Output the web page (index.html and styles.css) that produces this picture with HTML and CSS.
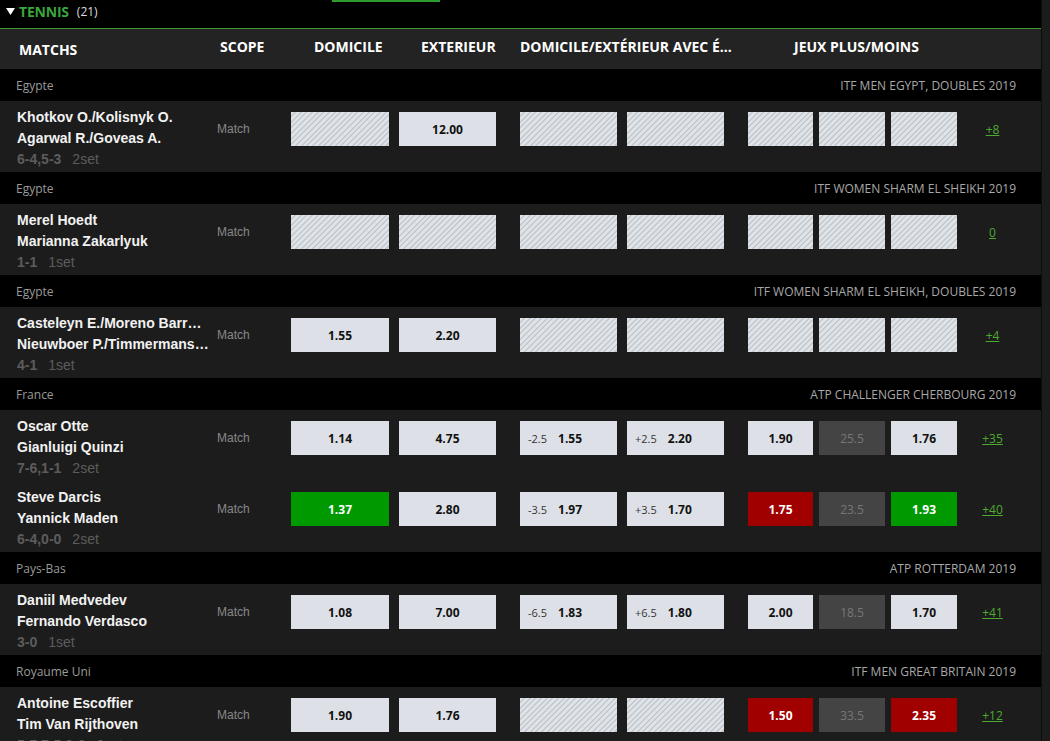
FILE: index.html
```html
<!DOCTYPE html>
<html lang="fr">
<head>
<meta charset="utf-8">
<title>Tennis</title>
<link rel="stylesheet" href="styles.css">
</head>
<body>
<div class="page">
  <main class="main">
    <div class="topbar">
      <div class="tab-indicator"></div>
      <div class="sport-title">
        <svg class="caret" width="9" height="7" viewBox="0 0 9 7"><polygon points="0,0 9,0 4.5,7" fill="#fff"/></svg>
        <span class="sport-name">TENNIS</span>
        <span class="sport-count">(21)</span>
      </div>
    </div>

    <div class="thead">
      <div class="th th-matchs">MATCHS</div>
      <div class="th th-scope">SCOPE</div>
      <div class="th th-dom">DOMICILE</div>
      <div class="th th-ext">EXTERIEUR</div>
      <div class="th th-hcp">DOMICILE/EXTÉRIEUR AVEC É...</div>
      <div class="th th-tot">JEUX PLUS/MOINS</div>
    </div>

    <section class="league">
      <div class="league-head"><span class="country">Egypte</span><span class="tournament">ITF MEN EGYPT, DOUBLES 2019</span></div>
      <div class="match">
        <div class="teams">
          <div class="team">Khotkov O./Kolisnyk O.</div>
          <div class="team">Agarwal R./Goveas A.</div>
          <div class="score"><b>6-4,5-3</b><span class="set">2set</span></div>
        </div>
        <div class="scope">Match</div>
        <div class="grp grp-1x2"><div class="odd dom locked"></div><div class="odd ext">12.00</div></div>
        <div class="grp grp-hcp"><div class="odd hcp locked"></div><div class="odd hcp locked"></div></div>
        <div class="grp grp-tot"><div class="odd tot locked"></div><div class="odd tot mid locked"></div><div class="odd tot locked"></div></div>
        <div class="more"><a href="#">+8</a></div>
      </div>
    </section>

    <section class="league">
      <div class="league-head"><span class="country">Egypte</span><span class="tournament">ITF WOMEN SHARM EL SHEIKH 2019</span></div>
      <div class="match">
        <div class="teams">
          <div class="team">Merel Hoedt</div>
          <div class="team">Marianna Zakarlyuk</div>
          <div class="score"><b>1-1</b><span class="set">1set</span></div>
        </div>
        <div class="scope">Match</div>
        <div class="grp grp-1x2"><div class="odd dom locked"></div><div class="odd ext locked"></div></div>
        <div class="grp grp-hcp"><div class="odd hcp locked"></div><div class="odd hcp locked"></div></div>
        <div class="grp grp-tot"><div class="odd tot locked"></div><div class="odd tot mid locked"></div><div class="odd tot locked"></div></div>
        <div class="more"><a href="#">0</a></div>
      </div>
    </section>

    <section class="league">
      <div class="league-head"><span class="country">Egypte</span><span class="tournament">ITF WOMEN SHARM EL SHEIKH, DOUBLES 2019</span></div>
      <div class="match">
        <div class="teams">
          <div class="team">Casteleyn E./Moreno Barr…</div>
          <div class="team">Nieuwboer P./Timmermans…</div>
          <div class="score"><b>4-1</b><span class="set">1set</span></div>
        </div>
        <div class="scope">Match</div>
        <div class="grp grp-1x2"><div class="odd dom">1.55</div><div class="odd ext">2.20</div></div>
        <div class="grp grp-hcp"><div class="odd hcp locked"></div><div class="odd hcp locked"></div></div>
        <div class="grp grp-tot"><div class="odd tot locked"></div><div class="odd tot mid locked"></div><div class="odd tot locked"></div></div>
        <div class="more"><a href="#">+4</a></div>
      </div>
    </section>

    <section class="league">
      <div class="league-head"><span class="country">France</span><span class="tournament">ATP CHALLENGER CHERBOURG 2019</span></div>
      <div class="match">
        <div class="teams">
          <div class="team">Oscar Otte</div>
          <div class="team">Gianluigi Quinzi</div>
          <div class="score"><b>7-6,1-1</b><span class="set">2set</span></div>
        </div>
        <div class="scope">Match</div>
        <div class="grp grp-1x2"><div class="odd dom">1.14</div><div class="odd ext">4.75</div></div>
        <div class="grp grp-hcp"><div class="odd hcp"><span class="line">-2.5</span>1.55</div><div class="odd hcp"><span class="line">+2.5</span>2.20</div></div>
        <div class="grp grp-tot"><div class="odd tot">1.90</div><div class="odd tot mid">25.5</div><div class="odd tot">1.76</div></div>
        <div class="more"><a href="#">+35</a></div>
      </div>
      <div class="match">
        <div class="teams">
          <div class="team">Steve Darcis</div>
          <div class="team">Yannick Maden</div>
          <div class="score"><b>6-4,0-0</b><span class="set">2set</span></div>
        </div>
        <div class="scope">Match</div>
        <div class="grp grp-1x2"><div class="odd dom up">1.37</div><div class="odd ext">2.80</div></div>
        <div class="grp grp-hcp"><div class="odd hcp"><span class="line">-3.5</span>1.97</div><div class="odd hcp"><span class="line">+3.5</span>1.70</div></div>
        <div class="grp grp-tot"><div class="odd tot down">1.75</div><div class="odd tot mid">23.5</div><div class="odd tot up">1.93</div></div>
        <div class="more"><a href="#">+40</a></div>
      </div>
    </section>

    <section class="league">
      <div class="league-head"><span class="country">Pays-Bas</span><span class="tournament">ATP ROTTERDAM 2019</span></div>
      <div class="match">
        <div class="teams">
          <div class="team">Daniil Medvedev</div>
          <div class="team">Fernando Verdasco</div>
          <div class="score"><b>3-0</b><span class="set">1set</span></div>
        </div>
        <div class="scope">Match</div>
        <div class="grp grp-1x2"><div class="odd dom">1.08</div><div class="odd ext">7.00</div></div>
        <div class="grp grp-hcp"><div class="odd hcp"><span class="line">-6.5</span>1.83</div><div class="odd hcp"><span class="line">+6.5</span>1.80</div></div>
        <div class="grp grp-tot"><div class="odd tot">2.00</div><div class="odd tot mid">18.5</div><div class="odd tot">1.70</div></div>
        <div class="more"><a href="#">+41</a></div>
      </div>
    </section>

    <section class="league">
      <div class="league-head"><span class="country">Royaume Uni</span><span class="tournament">ITF MEN GREAT BRITAIN 2019</span></div>
      <div class="match">
        <div class="teams">
          <div class="team">Antoine Escoffier</div>
          <div class="team">Tim Van Rijthoven</div>
          <div class="score"><b>5-7,7-5,0-0</b><span class="set">3set</span></div>
        </div>
        <div class="scope">Match</div>
        <div class="grp grp-1x2"><div class="odd dom">1.90</div><div class="odd ext">1.76</div></div>
        <div class="grp grp-hcp"><div class="odd hcp locked"></div><div class="odd hcp locked"></div></div>
        <div class="grp grp-tot"><div class="odd tot down">1.50</div><div class="odd tot mid">33.5</div><div class="odd tot down">2.35</div></div>
        <div class="more"><a href="#">+12</a></div>
      </div>
    </section>
  </main>
  <div class="scrollbar"></div>
</div>
</body>
</html>
```

FILE: styles.css
```css
html, body {
  margin: 0;
  padding: 0;
  height: 100%;
  overflow: hidden;
  background: #000;
}

.page {
  display: flex;
  height: 100vh;
  overflow: hidden;
  font-family: "Open Sans", "Liberation Sans", sans-serif;
}

.main {
  width: 1041px;
  flex: 0 0 1041px;
  overflow: hidden;
  background: #000;
}

.scrollbar {
  flex: 1;
  background: #1c1c1c;
  border-left: 1px solid #0c0c0c;
}

/* top bar */
.topbar {
  height: 28px;
}

.tab-indicator {
  height: 2px;
  width: 108px;
  margin-left: 332px;
  background: #2e9b2e;
}

.sport-title {
  height: 18px;
  display: flex;
  align-items: center;
  padding-left: 6px;
}

.caret {
  display: block;
  margin-right: 4px;
}

.sport-name {
  color: #3aa53a;
  font-weight: 700;
  font-size: 14px;
  letter-spacing: -0.2px;
  margin-right: 8px;
}

.sport-count {
  color: #ddd;
  font-size: 12px;
}

/* table header */
.thead {
  border-top: 1px solid #3c9c2c;
  height: 40px;
  background: #232323;
  display: flex;
  align-items: flex-start;
  color: #fff;
  font-weight: 700;
  font-size: 14px;
  line-height: 20px;
  white-space: nowrap;
}

.th {
  padding-top: 8px;
  box-sizing: border-box;
}

.th-matchs { width: 220px; padding-left: 19px; padding-top: 11px; }
.th-scope  { width: 94px; }
.th-dom    { width: 107px; }
.th-ext    { width: 99px; }
.th-hcp    { width: 274px; }
.th-tot    { flex: 1; }

/* league header */
.league-head {
  height: 32px;
  display: flex;
  align-items: center;
  justify-content: space-between;
  padding: 0 25px 0 16px;
  font-size: 12px;
  color: #9a9a9a;
}

.tournament {
  color: #a8a8a8;
}

/* match row */
.match {
  height: 71px;
  background: #1c1c1c;
  display: flex;
  align-items: flex-start;
}

.teams {
  width: 217px;
  flex: 0 0 217px;
  box-sizing: border-box;
  padding: 6px 0 0 17px;
  font-family: "Liberation Sans", Arial, sans-serif;
  font-size: 14px;
  line-height: 21px;
  white-space: nowrap;
}

.team {
  color: #f2f2f2;
  font-weight: 700;
}

.score {
  color: #5c5c5c;
}

.score b {
  font-weight: 700;
}

.set {
  margin-left: 11px;
}

.scope {
  width: 74px;
  flex: 0 0 74px;
  height: 34px;
  margin-top: 11px;
  display: flex;
  align-items: center;
  font-family: "Liberation Sans", Arial, sans-serif;
  font-size: 12px;
  color: #888;
}

.grp {
  display: flex;
  margin-top: 11px;
}

.grp-1x2 { gap: 10px; margin-right: 24px; }
.grp-hcp { gap: 10px; margin-right: 24px; }
.grp-tot { gap: 6px; }

.odd {
  height: 34px;
  box-sizing: border-box;
  background: #dde1e7;
  display: flex;
  align-items: center;
  justify-content: center;
  font-size: 12px;
  font-weight: 700;
  color: #111;
}

.odd.dom { width: 98px; }
.odd.ext { width: 97px; }
.odd.hcp { width: 97px; justify-content: flex-start; padding-left: 8px; }
.odd.tot { width: 66px; }
.grp-tot .odd:first-child { width: 65px; }

.line {
  font-size: 11px;
  font-weight: 400;
  color: #333;
  margin-right: 11px;
}

.odd.locked {
  background: repeating-linear-gradient(135deg, #dfe3e8 0px, #dfe3e8 2.5px, #c4c9d0 2.5px, #c4c9d0 4px);
}

.odd.mid {
  background: #444;
  color: #777;
  font-weight: 400;
}

.odd.mid.locked {
  background: repeating-linear-gradient(135deg, #dfe3e8 0px, #dfe3e8 2.5px, #c4c9d0 2.5px, #c4c9d0 4px);
}

.odd.up {
  background: #009a00;
  color: #fff;
}

.odd.down {
  background: #a00000;
  color: #fff;
}

.more {
  width: 71px;
  height: 34px;
  margin-top: 11px;
  display: flex;
  align-items: center;
  justify-content: center;
}

.more a {
  color: #4caa2e;
  font-size: 12px;
  text-decoration: underline;
}
```
